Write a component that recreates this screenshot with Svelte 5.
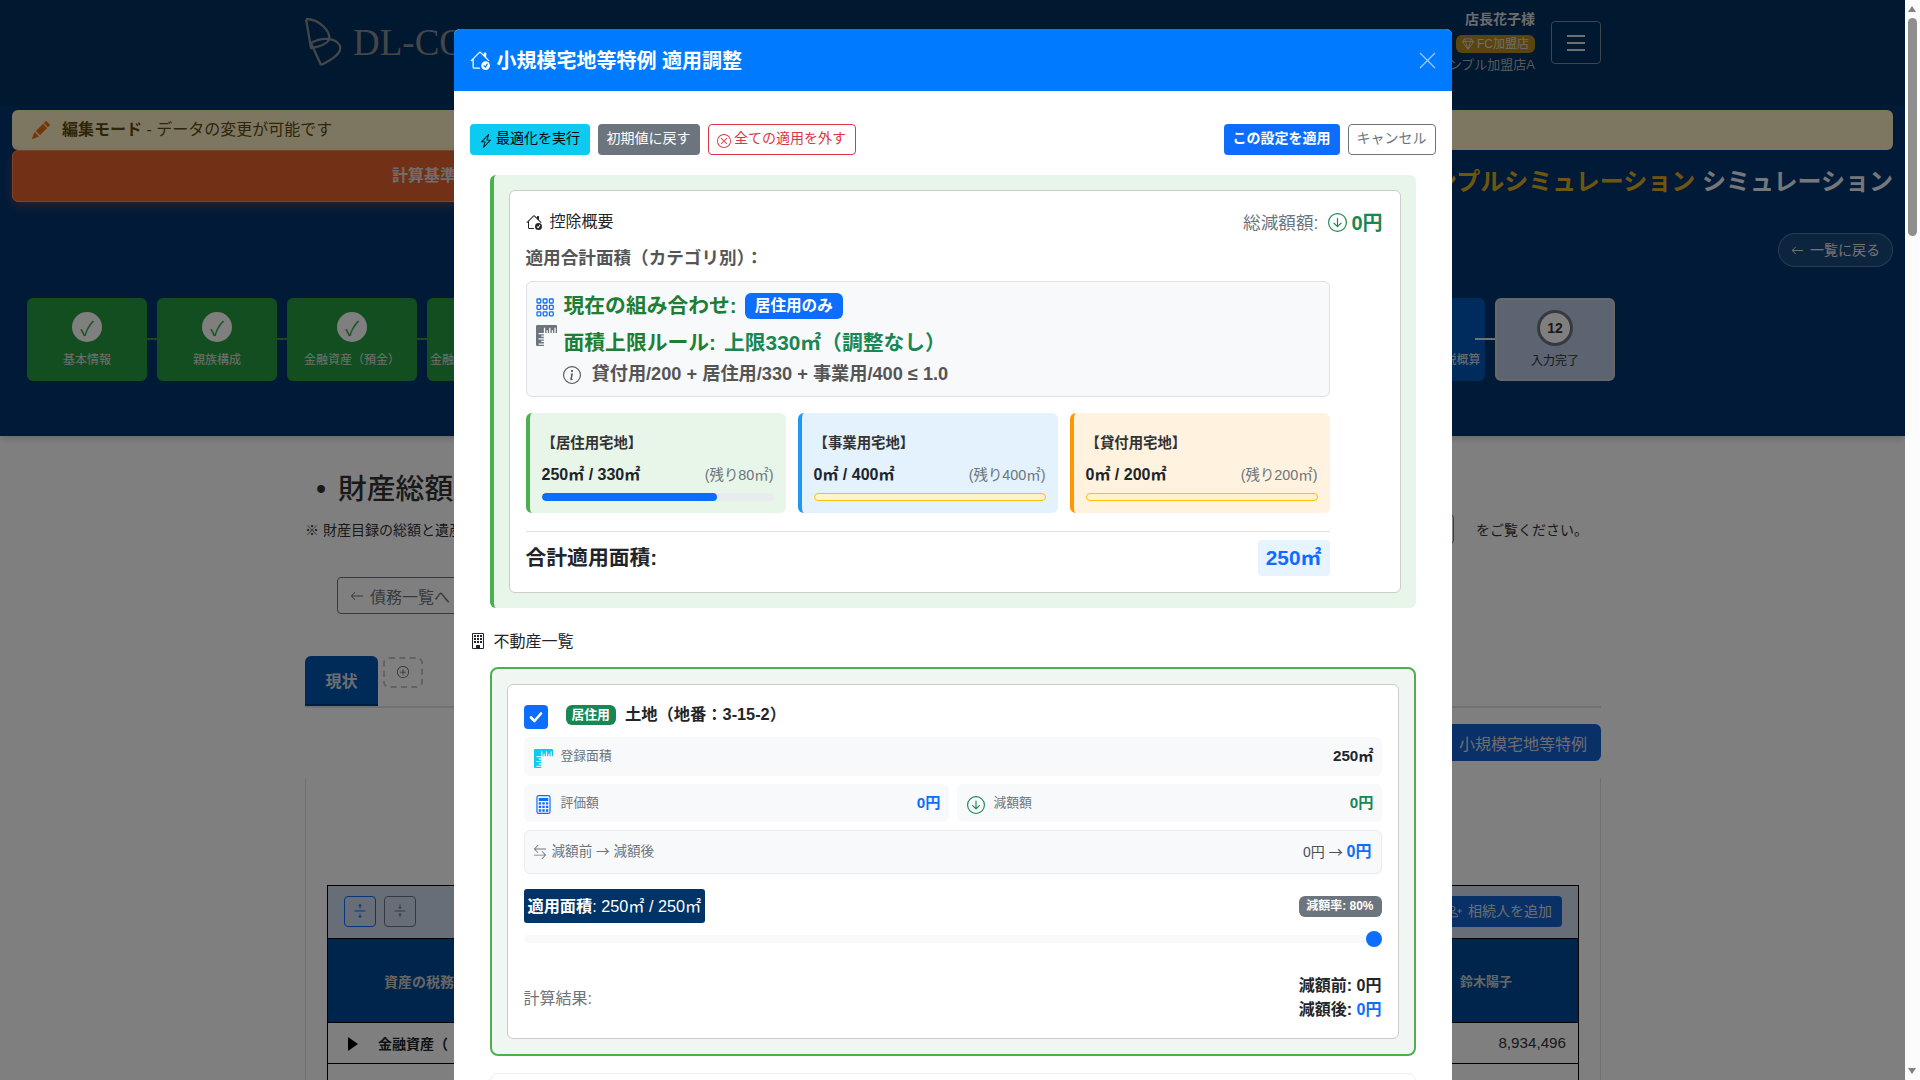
<script>
  const icons = {
    house: 'M7.293 1.5a1 1 0 0 1 1.414 0L11 3.793V2.5a.5.5 0 0 1 .5-.5h1a.5.5 0 0 1 .5.5v3.293l2.354 2.353a.5.5 0 0 1-.708.708L8 2.207l-5 5V13.5a.5.5 0 0 0 .5.5h4a.5.5 0 0 1 0 1h-4A1.5 1.5 0 0 1 2 13.5V8.207l-.646.647a.5.5 0 1 1-.708-.708z M12.5 16a3.5 3.5 0 1 0 0-7 3.5 3.5 0 0 0 0 7m1.679-4.493-1.335 2.226a.75.75 0 0 1-1.174.144l-.774-.773a.5.5 0 0 1 .708-.708l.547.548 1.17-1.951a.5.5 0 1 1 .858.514',
    bolt: 'M11.251.068a.5.5 0 0 1 .227.58L9.677 6.5H13a.5.5 0 0 1 .364.843l-8 8.5a.5.5 0 0 1-.842-.49L6.323 9.5H3a.5.5 0 0 1-.364-.843l8-8.5a.5.5 0 0 1 .615-.09zM4.157 8.5H7a.5.5 0 0 1 .478.647L6.11 13.59l5.732-6.09H9a.5.5 0 0 1-.478-.647L9.89 2.41z',
    xcircle: 'M8 15A7 7 0 1 1 8 1a7 7 0 0 1 0 14m0 1A8 8 0 1 0 8 0a8 8 0 0 0 0 16 M4.646 4.646a.5.5 0 0 1 .708 0L8 7.293l2.646-2.647a.5.5 0 0 1 .708.708L8.707 8l2.647 2.646a.5.5 0 0 1-.708.708L8 8.707l-2.646 2.647a.5.5 0 0 1-.708-.708L7.293 8 4.646 5.354a.5.5 0 0 1 0-.708',
    down: 'M1 8a7 7 0 1 0 14 0A7 7 0 0 0 1 8m15 0A8 8 0 1 1 0 8a8 8 0 0 1 16 0M8.5 4.5a.5.5 0 0 0-1 0v5.793L5.354 8.146a.5.5 0 1 0-.708.708l3 3a.5.5 0 0 0 .708 0l3-3a.5.5 0 0 0-.708-.708L8.5 10.293z',
    info: 'M8 15A7 7 0 1 1 8 1a7 7 0 0 1 0 14m0 1A8 8 0 1 0 8 0a8 8 0 0 0 0 16 M8.93 6.588l-2.29.287-.082.38.45.083c.294.07.352.176.288.469l-.738 3.468c-.194.897.105 1.319.808 1.319.545 0 1.178-.252 1.465-.598l.088-.416c-.2.176-.492.246-.686.246-.275 0-.375-.193-.304-.533zM9 4.5a1 1 0 1 1-2 0 1 1 0 0 1 2 0',
    ruler: 'M1 0a1 1 0 0 0-1 1v14a1 1 0 0 0 1 1h5v-1H2v-1h4v-1H4v-1h2v-1H2v-1h4V9H4V8h2V7H2V6h4V2h1v4h1V4h1v2h1V2h1v4h1V4h1v2h1V2h1v4h1V1a1 1 0 0 0-1-1z',
    swap: 'M1 11.5a.5.5 0 0 0 .5.5h11.793l-3.147 3.146a.5.5 0 0 0 .708.708l4-4a.5.5 0 0 0 0-.708l-4-4a.5.5 0 0 0-.708.708L13.293 11H1.5a.5.5 0 0 0-.5.5m14-7a.5.5 0 0 1-.5.5H2.707l3.147 3.146a.5.5 0 1 1-.708.708l-4-4a.5.5 0 0 1 0-.708l4-4a.5.5 0 1 1 .708.708L2.707 4H14.5a.5.5 0 0 1 .5.5',
    pencil: 'M12.854.146a.5.5 0 0 0-.707 0L10.5 1.793 14.207 5.5l1.647-1.646a.5.5 0 0 0 0-.708zm.646 6.061L9.793 2.5 3.293 9H3.5a.5.5 0 0 1 .5.5v.5h.5a.5.5 0 0 1 .5.5v.5h.5a.5.5 0 0 1 .5.5v.5h.5a.5.5 0 0 1 .5.5v.207zm-7.468 7.468A.5.5 0 0 1 6 13.5V13h-.5a.5.5 0 0 1-.5-.5V12h-.5a.5.5 0 0 1-.5-.5V11h-.5a.5.5 0 0 1-.5-.5V10h-.5a.5.5 0 0 1-.175-.032l-.179.178a.5.5 0 0 0-.11.168l-2 5a.5.5 0 0 0 .65.65l5-2a.5.5 0 0 0 .168-.11z',
    left: 'M15 8a.5.5 0 0 0-.5-.5H2.707l3.147-3.146a.5.5 0 1 0-.708-.708l-4 4a.5.5 0 0 0 0 .708l4 4a.5.5 0 0 0 .708-.708L2.707 8.5H14.5A.5.5 0 0 0 15 8',
    building: 'M2 1a1 1 0 0 1 1-1h10a1 1 0 0 1 1 1v14a1 1 0 0 1-1 1H3a1 1 0 0 1-1-1zm11 0H3v14h3v-2.5a.5.5 0 0 1 .5-.5h3a.5.5 0 0 1 .5.5V15h3z M4 2h2v2H4z M7 2h2v2H7z M10 2h2v2h-2z M4 5h2v2H4z M7 5h2v2H7z M10 5h2v2h-2z M4 8h2v2H4z M7 8h2v2H7z M10 8h2v2h-2z',
    calc: 'M12 1a1 1 0 0 1 1 1v12a1 1 0 0 1-1 1H4a1 1 0 0 1-1-1V2a1 1 0 0 1 1-1zM4 0a2 2 0 0 0-2 2v12a2 2 0 0 0 2 2h8a2 2 0 0 0 2-2V2a2 2 0 0 0-2-2z M4 2.5h8v2.5H4z M4 6h2v2H4z M7 6h2v2H7z M10 6h2v2h-2z M4 9h2v2H4z M7 9h2v2H7z M10 9h2v2h-2z M4 12h2v2H4z M7 12h2v2H7z M10 12h2v2h-2z',
    plus: 'M8 15A7 7 0 1 1 8 1a7 7 0 0 1 0 14m0 1A8 8 0 1 0 8 0a8 8 0 0 0 0 16 M8 4a.5.5 0 0 1 .5.5v3h3a.5.5 0 0 1 0 1h-3v3a.5.5 0 0 1-1 0v-3h-3a.5.5 0 0 1 0-1h3v-3A.5.5 0 0 1 8 4',
    person: 'M6 8a3 3 0 1 0 0-6 3 3 0 0 0 0 6m2-3a2 2 0 1 1-4 0 2 2 0 0 1 4 0m4 8c0 1-1 1-1 1H1s-1 0-1-1 1-4 6-4 6 3 6 4m-1-.004c-.001-.246-.154-.986-.832-1.664C9.516 10.68 8.289 10 6 10s-3.516.68-4.168 1.332C1.154 12.01 1 12.75 1 12.996z M13.5 5a.5.5 0 0 1 .5.5V7h1.5a.5.5 0 0 1 0 1H14v1.5a.5.5 0 0 1-1 0V8h-1.5a.5.5 0 0 1 0-1H13V5.500a.5.5 0 0 1 .5-.5',
    gem: 'M3.1.7a.5.5 0 0 1 .4-.2h9a.5.5 0 0 1 .4.2l2.976 3.974c.149.185.156.45.01.644L8.4 15.3a.5.5 0 0 1-.8 0L.1 5.3a.5.5 0 0 1 0-.6zm11.386 3.785-1.806-2.41-.776 2.413zm-3.633.004.961-2.989H4.186l.963 2.995zM5.47 5.495 8 13.366l2.532-7.876zm-1.371-.999-.78-2.422-1.818 2.425zM1.499 5.500l5.113 6.817-2.192-6.82zm7.889 6.817 5.123-6.830-2.928.002z'
  };

  // steps 4-10 sit behind the modal, so only the part that shows is filled in
  const steps = [
    { label: '基本情報', width: 120, state: 'done' },
    { label: '親族構成', width: 120, state: 'done' },
    { label: '金融資産（預金）', width: 130, state: 'done' },
    { label: '金融', width: 123.5, state: 'done', covered: true },
    { width: 123.5, state: 'done', covered: true },
    { width: 123.5, state: 'done', covered: true },
    { width: 123.5, state: 'done', covered: true },
    { width: 123.5, state: 'done', covered: true },
    { width: 123.5, state: 'done', covered: true },
    { width: 123.5, state: 'done', covered: true },
    { label: '相続税概算', width: 123.5, state: 'active', covered: true },
    { label: '入力完了', width: 120, state: 'todo' }
  ];

  const categories = [
    { cls: 'home', title: '【居住用宅地】', used: '250㎡ / 330㎡', rest: '(残り80㎡)', pct: 75.76 },
    { cls: 'biz', title: '【事業用宅地】', used: '0㎡ / 400㎡', rest: '(残り400㎡)', pct: 0 },
    { cls: 'rent', title: '【貸付用宅地】', used: '0㎡ / 200㎡', rest: '(残り200㎡)', pct: 0 }
  ];
</script>

{#snippet icon(name, size)}
  <svg class="icon" width={size} height={size} viewBox="0 0 16 16" fill="currentColor" aria-hidden="true">
    <path fill-rule="evenodd" d={icons[name]} />
  </svg>
{/snippet}

<div class="screen">
  <div class="page">
    <header class="hero">
      <nav class="nav">
        <div class="logo">
          <svg width="38" height="50" viewBox="0 0 38 50" fill="none" stroke="currentColor" stroke-width="2.3">
            <path d="M1 2 L6 31 C13 30 21 28 24 23 C26 15 15 2 1 2" />
            <path d="M16 48 L6 26 C16 20 31 20 35 29 C37 37 26 43 16 48" />
          </svg>
          <span>DL-CO</span>
        </div>
        <div class="user">
          <strong>店長花子様</strong>
          <div class="badges"><span class="role"></span><span class="fc">{@render icon('gem', 12)} FC加盟店</span></div>
          <small>サンプル加盟店A</small>
        </div>
        <button class="burger" aria-label="menu"><i></i><i></i><i></i></button>
      </nav>

      <div class="edit-bar">
        <span class="pencil">{@render icon('pencil', 18)}</span>
        <span class="edit-text"><b>編集モード</b> - データの変更が可能です</span>
      </div>
      <div class="bar-row">
        <div class="base-bar">計算基準</div>
        <h1 class="sim-title"><em>サンプルシミュレーション</em> シミュレーション</h1>
      </div>
      <div class="back-row">
        <button class="back">{@render icon('left', 13)} <span>一覧に戻る</span></button>
      </div>

      <div class="steps">
        {#each steps as s, i}
          <div class="step {s.state}" class:covered={s.covered} style="width:{s.width}px">
            {#if !s.covered}
              <span class="dot">{#if s.state === 'done'}✓{:else}{i + 1}{/if}</span>
            {/if}
            {#if s.label}<span class="step-label">{s.label}</span>{/if}
          </div>
        {/each}
      </div>
    </header>

    <main class="main">
      <h2 class="heading"><span class="bullet">•</span>財産総額</h2>
      <p class="note">
        <span class="note-lead">※ 財産目録の総額と遺産</span>
        <button class="link-btn" aria-label="財産目録"></button>
        <span class="note-tail">をご覧ください。</span>
      </p>
      <button class="debt-btn">{@render icon('left', 14)} 債務一覧へ</button>

      <div class="tabs">
        <span class="tab">現状</span>
        <span class="tab-add">{@render icon('plus', 12)}</span>
      </div>
      <div class="tab-actions"><button class="small-btn">小規模宅地等特例</button></div>

      <section class="sheet">
        <table>
          <thead>
            <tr class="tools">
              <td colspan="2">
                <div class="tool-row">
                  <span class="tool blue">
                    <svg width="16" height="16" viewBox="0 0 16 16" fill="none" stroke="currentColor"><path d="M2.500 8h11 M8 1.500v4 M6.600 3.200 L8 1.500 L9.400 3.200 M8 14.500v-4 M6.600 12.800 L8 14.500 L9.400 12.800" /></svg>
                  </span>
                  <span class="tool">
                    <svg width="16" height="16" viewBox="0 0 16 16" fill="none" stroke="currentColor"><path d="M2.500 8h11 M8 1.500v4 M6.600 3.800 L8 5.500 L9.400 3.800 M8 14.500v-4 M6.600 12.200 L8 10.500 L9.400 12.200" /></svg>
                  </span>
                  <button class="add-heir">{@render icon('person', 15)} <span>相続人を追加</span></button>
                </div>
              </td>
            </tr>
            <tr class="head"><th>資産の税務</th><th class="heir">鈴木陽子</th></tr>
          </thead>
          <tbody>
            <tr><td class="asset"><span class="tri"></span>金融資産（</td><td class="num">8,934,496</td></tr>
            <tr><td class="asset"></td><td></td></tr>
          </tbody>
        </table>
      </section>
    </main>

    <div class="backdrop">
      <div class="modal">
        <div class="modal-head">
          {@render icon('house', 20)}
          <span class="modal-title">小規模宅地等特例 適用調整</span>
          <button class="close" aria-label="閉じる">
            <svg width="17" height="17" viewBox="0 0 17 17" stroke="currentColor" stroke-width="1.4"><path d="M1 1 L16 16 M16 1 L1 16" /></svg>
          </button>
        </div>

        <div class="modal-body">
          <div class="actions">
            <button class="btn info">{@render icon('bolt', 14)} <span>最適化を実行</span></button>
            <button class="btn gray"><span>初期値に戻す</span></button>
            <button class="btn danger">{@render icon('xcircle', 14)} <span>全ての適用を外す</span></button>
            <span class="spacer"></span>
            <button class="btn primary"><span>この設定を適用</span></button>
            <button class="btn cancel"><span>キャンセル</span></button>
          </div>

          <section class="summary">
            <div class="summary-card">
              <div class="summary-top">
                <span class="summary-title">{@render icon('house', 16)} <span>控除概要</span></span>
                <span class="total-cut"><span class="cut-label">総減額額:</span><span class="cut-icon">{@render icon('down', 19)}</span><b>0円</b></span>
              </div>
              <div class="cat-head">適用合計面積（カテゴリ別）：</div>

              <div class="inner">
                <div class="combo">
                  <div class="combo-line">
                    <span class="grid-icon">
                      <svg width="18" height="19" viewBox="0 0 18 19" fill="none" stroke="currentColor" stroke-width="1.3">
                        {#each [0, 1, 2] as r}
                          {#each [0, 1, 2] as c}
                            <rect x={1 + c * 6.2} y={1 + r * 6.4} width="3.8" height="4" rx="0.8" />
                          {/each}
                        {/each}
                      </svg>
                    </span>
                    <span class="combo-text lift">現在の組み合わせ:</span>
                    <span class="combo-badge">居住用のみ</span>
                  </div>
                  <div class="combo-line second">
                    <span class="ruler-icon">{@render icon('ruler', 21)}</span>
                    <span class="combo-text">面積上限ルール:</span>
                    <span class="combo-text alt">上限330㎡（調整なし）</span>
                  </div>
                  <div class="formula">
                    {@render icon('info', 18)}
                    <span class="formula-text">貸付用/200 + 居住用/330 + 事業用/400 ≤ 1.0</span>
                  </div>
                </div>

                <div class="cats">
                  {#each categories as c}
                    <div class="cat {c.cls}">
                      <div class="cat-title">{c.title}</div>
                      <div class="cat-line"><b>{c.used}</b><span>{c.rest}</span></div>
                      <div class="bar" class:empty={c.pct === 0}>
                        <div class="fill" style="width:{c.pct}%"></div>
                      </div>
                    </div>
                  {/each}
                </div>

                <div class="total">
                  <b>合計適用面積:</b>
                  <span class="total-value">250㎡</span>
                </div>
              </div>
            </div>
          </section>

          <h3 class="list-head">{@render icon('building', 16)} <span>不動産一覧</span></h3>

          <section class="prop">
            <div class="prop-card">
              <div class="prop-top">
                <span class="check">
                  <svg width="16" height="16" viewBox="0 0 16 16" fill="none" stroke="#fff" stroke-width="2.6" stroke-linecap="round" stroke-linejoin="round"><path d="M3 8.5 L6.5 12 L13 4.500" /></svg>
                </span>
                <span class="use-badge">居住用</span>
                <span class="prop-name">土地（地番：3-15-2）</span>
              </div>

              <div class="row">
                <span class="ico cyan">{@render icon('ruler', 19)}</span>
                <span class="row-label">登録面積</span>
                <b class="row-val">250㎡</b>
              </div>
              <div class="row-pair">
                <div class="row">
                  <span class="ico blue">{@render icon('calc', 19)}</span>
                  <span class="row-label">評価額</span>
                  <b class="row-val blue">0円</b>
                </div>
                <div class="row">
                  <span class="ico green">{@render icon('down', 18)}</span>
                  <span class="row-label">減額額</span>
                  <b class="row-val green">0円</b>
                </div>
              </div>
              <div class="row flow">
                <span class="swap">{@render icon('swap', 14)}</span>
                <span class="flow-label">減額前 <span class="glyph">→</span> 減額後</span>
                <span class="flow-val">0円 <span class="glyph">→</span> <b>0円</b></span>
              </div>

              <div class="applied">
                <span class="applied-badge"><b>適用面積</b>: 250㎡ / 250㎡</span>
                <span class="rate">減額率: 80%</span>
              </div>
              <input class="slider" type="range" min="0" max="250" value="250" />

              <div class="result">
                <span class="result-label">計算結果:</span>
                <div class="result-vals">
                  <div>減額前: 0円</div>
                  <div>減額後: <span class="blue-text">0円</span></div>
                </div>
              </div>
            </div>
          </section>

          <section class="next-prop"></section>
        </div>
      </div>
    </div>
  </div>

  <div class="scrollbar">
    <span class="arrow up"></span>
    <span class="thumb"></span>
    <span class="arrow dn"></span>
  </div>
</div>

<style>
  :global(body) {
    margin: 0;
    font-family: "Liberation Sans", "Noto Sans CJK JP", sans-serif;
    color: #212529;
  }

  button {
    font: inherit;
  }

  .icon {
    display: inline-block;
    flex: none;
    vertical-align: -2px;
  }

  .screen {
    display: flex;
    height: 100vh;
    overflow: hidden;
  }

  .page {
    position: relative;
    flex: 1;
    min-width: 0;
    overflow: hidden;
    background: #fff;
  }

  /* page under the overlay */
  .hero {
    height: 436px;
    background: #003570;
    box-shadow: 0 2px 8px rgba(0, 0, 0, 0.2);
  }

  .nav {
    display: flex;
    align-items: flex-start;
    justify-content: space-between;
    height: 105px;
    padding: 0 304px 0 305px;
    background: #003060;
  }

  .logo {
    display: flex;
    align-items: center;
    gap: 10px;
    margin-top: 17px;
    color: #8a8c90;
  }

  .logo span {
    font-family: "Liberation Serif", serif;
    font-size: 37px;
  }

  .user {
    margin-left: auto;
    margin-top: 11px;
    margin-right: 16px;
    text-align: right;
    color: #fff;
  }

  .user strong {
    display: block;
    font-size: 14px;
    line-height: 17px;
    color: #d8d8d8;
  }

  .badges {
    margin: 6px 0 3px;
    line-height: 18px;
    white-space: nowrap;
  }

  .role {
    display: inline-block;
    width: 20px;
    height: 18px;
    margin-right: 5px;
    border-radius: 6px;
    background: #6c757d;
    vertical-align: top;
  }

  .fc {
    display: inline-block;
    padding: 0 6px;
    border-radius: 6px;
    background: #b58a1c;
    color: #ddd;
    font-size: 12px;
    line-height: 18px;
  }

  .user small {
    display: block;
    font-size: 13px;
    line-height: 18px;
    color: #b0b0b0;
  }

  .burger {
    display: flex;
    flex-direction: column;
    align-items: center;
    justify-content: center;
    gap: 5px;
    width: 50px;
    height: 43px;
    margin-top: 21px;
    padding: 0;
    background: none;
    border: 1px solid #7c8a9c;
    border-radius: 4px;
  }

  .burger i {
    width: 18px;
    height: 2px;
    background: #e0e0e0;
  }

  .edit-bar {
    display: flex;
    align-items: center;
    height: 40px;
    margin: 5px 12px 0;
    padding-left: 20px;
    box-sizing: border-box;
    background: #fbeec5;
    border-radius: 6px;
    color: #5c4a10;
  }

  .edit-text {
    padding-bottom: 4px;
    white-space: pre;
  }

  .pencil {
    margin-right: 12px;
    color: #e86a10;
    display: flex;
  }

  .bar-row {
    display: flex;
    align-items: flex-start;
    justify-content: space-between;
    height: 52px;
    padding: 0 12px;
  }

  .base-bar {
    box-sizing: border-box;
    width: 1000px;
    height: 52px;
    padding: 11px 0 0 379px;
    background: #e4622f;
    border: 1px solid #f08a60;
    border-radius: 6px;
    box-shadow: 0 4px 12px rgba(255, 116, 64, 0.3);
    color: #ddd;
    font-size: 16px;
    font-weight: 700;
  }

  .sim-title {
    margin: 16px 0 0;
    font-size: 24px;
    line-height: 31px;
    font-weight: 700;
    color: #fff;
    opacity: 0.92;
  }

  .sim-title em {
    font-style: normal;
    color: #f0b818;
  }

  .back-row {
    display: flex;
    justify-content: flex-end;
    margin-top: 31px;
    padding-right: 12px;
  }

  .back {
    display: flex;
    align-items: center;
    gap: 6px;
    height: 34px;
    padding: 0 12px;
    background: rgba(255, 255, 255, 0.1);
    border: 1px solid rgba(255, 255, 255, 0.25);
    border-radius: 17px;
    color: #e6e6e6;
    font-size: 14px;
  }

  .back span {
    padding-bottom: 3px;
  }

  .steps {
    display: flex;
    gap: 10px;
    margin-top: 31px;
    padding-left: 27px;
  }

  .step {
    position: relative;
    box-sizing: border-box;
    flex: none;
    display: flex;
    flex-direction: column;
    align-items: center;
    height: 83px;
    padding-top: 14px;
    border-radius: 6px;
    background: #259c41;
    color: #e0e0e0;
    font-size: 12px;
  }

  .step.covered {
    align-items: flex-start;
    padding: 52px 0 0 3px;
  }

  .step:not(:last-child)::after {
    content: '';
    position: absolute;
    top: 40px;
    right: -20px;
    width: 30px;
    height: 2px;
    background: #259c41;
  }

  .step.active {
    background: #0059bb;
  }

  .step.active::after {
    background: #dee2e6;
  }

  .step.active .step-label {
    margin-left: 56px;
  }

  .step.todo {
    background: #b6c8e0;
    border: 2px solid #d0d0d0;
    color: #333;
    padding-top: 10px;
  }

  .dot {
    display: flex;
    align-items: center;
    justify-content: center;
    box-sizing: border-box;
    width: 30px;
    height: 30px;
    border-radius: 50%;
    background: #fff;
    color: #28a745;
    font-size: 20px;
    margin-bottom: 8px;
  }

  .step.todo .dot {
    width: 36px;
    height: 36px;
    border: 3px solid #6c757d;
    color: #333;
    font-size: 14px;
    font-weight: 700;
    margin-bottom: 5px;
  }

  .step-label {
    white-space: nowrap;
  }

  .main {
    box-sizing: border-box;
    width: 1296px;
    margin-left: 305px;
  }

  .heading {
    margin: 0;
    padding-top: 35px;
    font-size: 28.8px;
    line-height: 36px;
    font-weight: 500;
    color: #333;
  }

  .bullet {
    display: inline-block;
    width: 33px;
    padding-left: 11px;
    box-sizing: border-box;
  }

  .note {
    display: flex;
    align-items: center;
    height: 30px;
    margin: 7px 0 0;
    font-size: 14px;
    color: #333;
    white-space: nowrap;
  }

  .note-lead {
    width: 856px;
    overflow: hidden;
  }

  .link-btn {
    width: 293px;
    height: 30px;
    background: none;
    border: 1px solid #17a2b8;
    border-radius: 4px;
  }

  .note-tail {
    margin-left: 22px;
  }

  .debt-btn {
    display: flex;
    align-items: center;
    gap: 6px;
    height: 37px;
    width: 180px;
    margin: 33px 0 0 32px;
    padding: 0 12px;
    background: none;
    border: 1px solid #6c757d;
    border-radius: 4px;
    color: #6c757d;
    font-size: 16px;
  }

  .tabs {
    display: flex;
    align-items: flex-start;
    gap: 5px;
    height: 50px;
    margin-top: 42px;
    border-bottom: 2px solid #dee2e6;
  }

  .tab {
    box-sizing: border-box;
    width: 73px;
    height: 50px;
    padding-top: 12px;
    text-align: center;
    background: #0056b3;
    border-bottom: 2px solid #003d80;
    border-radius: 6px 6px 0 0;
    color: #ddd;
    font-weight: 700;
  }

  .tab-add {
    display: flex;
    justify-content: center;
    box-sizing: border-box;
    width: 40px;
    height: 31px;
    margin-top: 1px;
    padding-top: 7px;
    border: 2px dashed #c4c4c4;
    border-radius: 6px;
    color: #555;
  }

  .tab-actions {
    display: flex;
    justify-content: flex-end;
    margin-top: 16px;
  }

  .small-btn {
    height: 37px;
    padding: 0 14px 0 20px;
    background: #1560d0;
    border: 0;
    border-radius: 6px;
    color: #ddd;
    font-size: 16px;
  }

  .sheet {
    margin-top: 17px;
    padding: 107px 21px 0;
    height: 300px;
    border-left: 1px solid #e0e0e0;
    border-right: 1px solid #e0e0e0;
  }

  table {
    width: 100%;
    border-collapse: collapse;
    border: 1px solid #000;
    font-size: 14px;
  }

  .tools td {
    height: 52px;
    padding: 0 16px;
    background: #cfddf0;
    border-bottom: 1px solid #000;
  }

  .tool-row {
    display: flex;
    align-items: center;
    gap: 8px;
    margin-top: -2px;
  }

  .tool {
    display: flex;
    align-items: center;
    justify-content: center;
    width: 32px;
    height: 31px;
    box-sizing: border-box;
    border: 1px solid #6c757d;
    border-radius: 4px;
    color: #6c757d;
  }

  .tool.blue {
    border-color: #0d6efd;
    color: #0d6efd;
  }

  .add-heir {
    display: flex;
    align-items: center;
    gap: 6px;
    height: 31px;
    margin-left: auto;
    padding: 0 10px;
    background: #1560d0;
    border: 0;
    border-radius: 4px;
    color: #ddd;
    font-size: 14px;
  }

  .add-heir span {
    padding-bottom: 2px;
  }

  .head th {
    height: 83px;
    background: #004a99;
    color: #ccc;
    font-size: 14px;
    text-align: left;
    padding: 0 0 0 56px;
    border-bottom: 1px solid #000;
  }

  .head th.heir {
    width: 118px;
    padding-left: 1px;
    font-size: 13px;
  }

  tbody td {
    height: 41px;
    padding-bottom: 2px;
    box-sizing: border-box;
    border-bottom: 1px solid #000;
  }

  .asset {
    padding-left: 20px;
    font-weight: 700;
  }

  .tri {
    display: inline-block;
    width: 0;
    height: 0;
    margin-right: 20px;
    border-left: 10px solid #000;
    border-top: 7px solid transparent;
    border-bottom: 7px solid transparent;
    vertical-align: -2px;
  }

  .num {
    text-align: right;
    padding-right: 12px;
    font-size: 15.2px;
    color: #333;
  }

  .backdrop {
    position: absolute;
    inset: 0;
    z-index: 10;
    display: flex;
    justify-content: center;
    padding-top: 29px;
    background: rgba(0, 0, 0, 0.5);
  }

  /* modal */
  .modal {
    width: 998px;
    height: 1300px;
    background: #fff;
    border-radius: 6px 6px 0 0;
  }

  .modal-head {
    display: flex;
    align-items: center;
    gap: 7px;
    height: 62px;
    padding: 0 16px;
    background: #007bff;
    border-radius: 6px 6px 0 0;
    color: #fff;
  }

  .modal-title {
    padding-bottom: 2px;
    font-size: 20px;
    font-weight: 700;
  }

  .close {
    display: flex;
    margin-left: auto;
    padding: 0;
    background: none;
    border: 0;
    color: rgba(255, 255, 255, 0.6);
  }

  .modal-body {
    padding: 33px 16px 0;
  }

  .actions {
    display: flex;
    align-items: stretch;
    gap: 8px;
    height: 31px;
  }

  .spacer {
    flex: 1;
  }

  .btn {
    display: flex;
    align-items: center;
    justify-content: center;
    gap: 3px;
    box-sizing: border-box;
    padding: 0 8px;
    border: 1px solid transparent;
    border-radius: 4px;
    font-size: 14px;
  }

  .btn span {
    padding-bottom: 5px;
  }

  .btn .icon {
    margin-top: 2px;
  }

  .btn.info {
    width: 120px;
    background: #0dcaf0;
    color: #000;
  }

  .btn.gray {
    width: 102px;
    background: #6c757d;
    color: #fff;
  }

  .btn.danger {
    width: 148px;
    background: #fff;
    border-color: #dc3545;
    color: #dc3545;
  }

  .btn.primary {
    width: 116px;
    background: #0d6efd;
    color: #fff;
    font-weight: 700;
  }

  .btn.cancel {
    width: 88px;
    background: #fff;
    border-color: #6c757d;
    color: #6c757d;
  }

  .summary {
    margin: 20px 20px 0;
    padding: 15px;
    background: #e8f5e9;
    border-left: 4px solid #4caf50;
    border-radius: 6px;
  }

  .summary-card {
    padding: 18px 16px 16px;
    background: #fff;
    border: 1px solid #ccc;
    border-radius: 6px;
  }

  .summary-top {
    display: flex;
    align-items: center;
    justify-content: space-between;
    height: 26px;
    padding-right: 1px;
  }

  .summary-title {
    display: flex;
    align-items: center;
    gap: 8px;
    color: #212529;
  }

  .summary-title span {
    padding-bottom: 4px;
  }

  .total-cut {
    display: flex;
    align-items: center;
    color: #6c757d;
  }

  .cut-label {
    padding-bottom: 2px;
    font-size: 17.6px;
  }

  .cut-icon {
    display: flex;
    margin: 0 4px 0 10px;
    color: #198754;
  }

  .total-cut b {
    padding-bottom: 2px;
    font-size: 20px;
    color: #198754;
  }

  .cat-head {
    margin-top: 11px;
    line-height: 24px;
    font-size: 17.6px;
    font-weight: 700;
    color: #555;
  }

  .inner {
    width: 804px;
  }

  .combo {
    margin-top: 11px;
    padding: 8px 0 8px 9px;
    background: #f8f9fa;
    border: 1px solid #dee2e6;
    border-radius: 6px;
  }

  .combo-line {
    display: flex;
    align-items: center;
    height: 32px;
    gap: 8px;
  }

  .combo-line.second {
    margin-top: 3px;
  }

  .grid-icon {
    display: flex;
    width: 20px;
    margin-top: 3px;
    color: #0d6efd;
  }

  .ruler-icon {
    display: flex;
    width: 20px;
    margin-top: -11px;
    color: #6c757d;
  }

  .combo-text {
    font-size: 20.8px;
    font-weight: 700;
    color: #1e7e34;
    white-space: pre;
  }

  .combo-text.lift {
    padding-bottom: 5px;
  }

  .combo-text.alt {
    color: #198754;
  }

  .combo-badge {
    padding: 0 10px;
    height: 26px;
    line-height: 26px;
    border-radius: 6px;
    background: #0d6efd;
    color: #fff;
    font-size: 15.6px;
    font-weight: 700;
  }

  .formula {
    display: flex;
    align-items: center;
    gap: 11px;
    height: 26px;
    margin-top: 5px;
    padding-left: 27px;
    color: #555;
  }

  .formula-text {
    padding-bottom: 6px;
    font-size: 18.2px;
    font-weight: 700;
    white-space: nowrap;
  }

  .cats {
    display: grid;
    grid-template-columns: repeat(3, 1fr);
    gap: 12px;
    margin-top: 16px;
  }

  .cat {
    height: 100px;
    box-sizing: border-box;
    padding: 18px 12px 0;
    border-left: 4px solid;
    border-radius: 6px;
  }

  .cat.home {
    background: #e8f5e9;
    border-color: #4caf50;
  }

  .cat.biz {
    background: #e3f2fd;
    border-color: #2196f3;
  }

  .cat.rent {
    background: #fff3e0;
    border-color: #ff9800;
  }

  .cat-title {
    font-size: 14.4px;
    line-height: 24px;
    font-weight: 700;
    color: #333;
  }

  .cat-line {
    display: flex;
    align-items: center;
    justify-content: space-between;
    height: 24px;
    margin-top: 6px;
  }

  .cat-line b {
    font-size: 16px;
  }

  .cat-line span {
    font-size: 14.4px;
    color: #6c757d;
  }

  .bar {
    height: 8px;
    margin-top: 8px;
    box-sizing: border-box;
    background: #e9ecef;
    border-radius: 4px;
    overflow: hidden;
  }

  .bar.empty {
    background: #fff3cd;
    border: 1px solid #ffc107;
  }

  .fill {
    height: 100%;
    background: #0d6efd;
    border-radius: 4px;
  }

  .total {
    display: flex;
    align-items: center;
    justify-content: space-between;
    margin-top: 18px;
    padding-top: 8px;
    border-top: 1px solid #dee2e6;
  }

  .total b {
    padding-bottom: 4px;
    font-size: 20.8px;
    color: #212529;
  }

  .total-value {
    box-sizing: border-box;
    width: 72px;
    height: 36px;
    line-height: 36px;
    text-align: center;
    background: #e7f3ff;
    border-radius: 4px;
    color: #0d6efd;
    font-size: 20.8px;
    font-weight: 700;
  }

  .list-head {
    display: flex;
    align-items: center;
    gap: 8px;
    height: 24px;
    margin: 21px 0 0;
    font-size: 16px;
    font-weight: 400;
    color: #212529;
  }

  .list-head span {
    padding-bottom: 2px;
  }

  .prop {
    margin: 14px 20px 0;
    padding: 15px;
    background: #f0f7f3;
    border: 2px solid #4caf50;
    border-radius: 8px;
  }

  .prop-card {
    padding: 20px 16px 16px;
    background: #fff;
    border: 1px solid #ccc;
    border-radius: 6px;
  }

  .prop-top {
    display: flex;
    align-items: flex-start;
    height: 24px;
  }

  .check {
    display: flex;
    align-items: center;
    justify-content: center;
    width: 24px;
    height: 24px;
    background: #0d6efd;
    border-radius: 4px;
  }

  .use-badge {
    margin-left: 18px;
    padding: 0 6px;
    height: 20px;
    line-height: 20px;
    border-radius: 6px;
    background: #198754;
    color: #fff;
    font-size: 12.8px;
    font-weight: 700;
  }

  .prop-name {
    margin-left: 9px;
    font-size: 16.3px;
    line-height: 18px;
    font-weight: 700;
  }

  .row {
    display: flex;
    align-items: center;
    box-sizing: border-box;
    height: 39px;
    margin-top: 8px;
    padding: 0 8px 0 10px;
    background: #f8f9fa;
    border-radius: 6px;
  }

  .row-pair {
    display: grid;
    grid-template-columns: 425px 425px;
    gap: 8px;
  }

  .row-pair .row {
    height: 38px;
  }

  .ico {
    display: flex;
    justify-content: center;
    width: 19px;
    margin-top: 3px;
    margin-right: 8px;
  }

  .ico.cyan {
    color: #0dcaf0;
  }

  .ico.blue {
    color: #0d6efd;
  }

  .ico.green {
    color: #198754;
  }

  .row-label {
    padding-bottom: 4px;
    font-size: 12.8px;
    color: #6c757d;
  }

  .row-val {
    margin-left: auto;
    padding-bottom: 5px;
    font-size: 15.2px;
    color: #212529;
  }

  .row-val.blue {
    color: #0d6efd;
  }

  .row-val.green {
    color: #198754;
  }

  .row.flow {
    height: 44px;
    border: 1px solid #e9ecef;
    padding: 0 9px 0 8px;
  }

  .swap {
    display: flex;
    margin-right: 5px;
    color: #6c757d;
  }

  .flow-label {
    padding-bottom: 4px;
    font-size: 13.6px;
    color: #6c757d;
  }

  .flow-val {
    margin-left: auto;
    padding-bottom: 4px;
    font-size: 14px;
    color: #495057;
  }

  .glyph {
    font-family: "Noto Sans CJK JP", sans-serif;
  }

  .flow-val b {
    font-size: 16px;
    color: #0d6efd;
  }

  .applied {
    display: flex;
    align-items: center;
    justify-content: space-between;
    height: 34px;
    margin-top: 15px;
  }

  .applied-badge {
    height: 34px;
    line-height: 34px;
    padding: 0 4px;
    background: #003366;
    border-radius: 3px;
    color: #fff;
    font-size: 16.2px;
  }

  .rate {
    height: 21px;
    line-height: 21px;
    padding: 0 8px 0 7px;
    background: #6c757d;
    border-radius: 6px;
    color: #fff;
    font-size: 12px;
    font-weight: 700;
  }

  .slider {
    display: block;
    width: 100%;
    height: 16px;
    margin: 8px 0 0;
    padding: 0;
    appearance: none;
    background: none;
  }

  .slider::-webkit-slider-runnable-track {
    height: 8px;
    background: #f8f9fa;
    border-radius: 4px;
  }

  .slider::-webkit-slider-thumb {
    appearance: none;
    width: 16px;
    height: 16px;
    margin-top: -4px;
    border-radius: 50%;
    background: #0d6efd;
  }

  .result {
    display: flex;
    align-items: center;
    justify-content: space-between;
    margin-top: 27px;
  }

  .result-label {
    padding-bottom: 2px;
    color: #6c757d;
  }

  .result-vals {
    font-weight: 700;
    line-height: 24px;
    text-align: right;
  }

  .blue-text {
    color: #0d6efd;
  }

  .next-prop {
    height: 200px;
    margin: 17px 20px 0;
    border: 1px solid #eee;
    border-radius: 8px;
  }

  .scrollbar {
    position: relative;
    flex: none;
    width: 15px;
    background: #fcfcfc;
  }

  .thumb {
    position: absolute;
    top: 18px;
    left: 3px;
    width: 9px;
    height: 218px;
    border-radius: 5px;
    background: #8f8f8f;
  }

  .arrow {
    position: absolute;
    left: 3px;
    width: 0;
    height: 0;
    border-left: 4.5px solid transparent;
    border-right: 4.5px solid transparent;
  }

  .arrow.up {
    top: 6px;
    border-bottom: 6px solid #808080;
  }

  .arrow.dn {
    bottom: 6px;
    border-top: 6px solid #808080;
  }
</style>
